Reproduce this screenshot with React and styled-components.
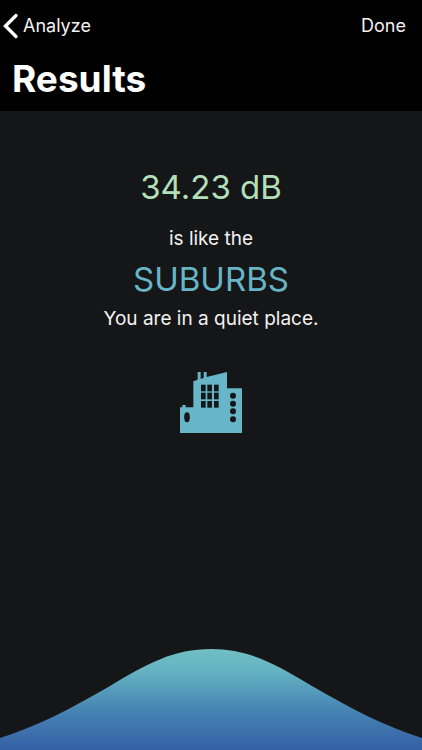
import React from "react";
import styled, { createGlobalStyle } from "styled-components";

const App = () => {
    return (
        <>
            <GlobalStyle />
            <Screen>
                <Header>
                    <NavBar>
                        <NavButton type="button">
                            <BackIcon />
                            Analyze
                        </NavButton>
                        <NavButton type="button">Done</NavButton>
                    </NavBar>
                    <Title>Results</Title>
                </Header>
                <Content>
                    <Reading $color="#b2dfb8">34.23 dB</Reading>
                    <Caption $spaced>is like the</Caption>
                    <Reading $color="#67b5c6">SUBURBS</Reading>
                    <Caption>You are in a quiet place.</Caption>
                    <BuildingIcon />
                </Content>
                <Wave />
            </Screen>
        </>
    )
}

const BackIcon = () => (
    <svg width="16" height="26" viewBox="0 0 16 26" fill="none" aria-hidden="true">
        <path d="M13 2.5 2.5 13 13 23.5" stroke="#fff" strokeWidth="3.4" strokeLinecap="round" />
    </svg>
)

const BuildingIcon = () => (
    <Building viewBox="27 25 186 183" aria-hidden="true">
        <path
            fill="#67b5c6"
            d="M27 131H34V124H44V131H67V53L80 48V25H89V46L98 43V25H107V40L168 25V74H213V208H27Z"
        />
        <g fill="#151618">
            {[63, 87, 112].map((y) => (
                [90, 109, 129].map((x) => (
                    <rect key={`${x}-${y}`} x={x} y={y} width="14" height="20" />
                ))
            ))}
            {[96, 120, 143, 167].map((y) => (
                <circle key={y} cx="186" cy={y} r="9" />
            ))}
            <ellipse cx="48" cy="161" rx="8.5" ry="15" />
        </g>
    </Building>
)

const Wave = () => (
    <WaveSvg viewBox="0 0 422 102" preserveAspectRatio="none" aria-hidden="true">
        <defs>
            <linearGradient id="wave" x1="0" y1="0" x2="0" y2="1">
                <stop offset="0" stopColor="#70bfc2" />
                <stop offset="0.2" stopColor="#65b4c3" />
                <stop offset="0.6" stopColor="#4785b3" />
                <stop offset="1" stopColor="#345fa5" />
            </linearGradient>
        </defs>
        <path
            fill="url(#wave)"
            d="M0 90C40 77 72 60 110 38C148 15 174 1 211 1C248 1 274 15 312 38C350 60 382 77 422 90V102H0Z"
        />
    </WaveSvg>
)

export default App;

const GlobalStyle = createGlobalStyle`
    * {
        box-sizing: border-box;
    }

    body {
        margin: 0;
        background-color: #151618;
        color: #fff;
        font-family: Inter, "Liberation Sans", sans-serif;
    }
`;

const Screen = styled.div`
    display: flex;
    flex-direction: column;
    min-height: 100vh;
`;

const Header = styled.header`
    background-color: #000;
    padding-bottom: 6px;
`;

const NavBar = styled.nav`
    display: flex;
    align-items: center;
    justify-content: space-between;
    height: 52px;
    padding: 0 16px 0 3px;
`;

const NavButton = styled.button`
    display: flex;
    align-items: center;
    gap: 4px;
    padding: 0;
    border: none;
    background: none;
    color: #f2f2f2;
    font: inherit;
    font-size: 18px;
    line-height: 24px;
    cursor: pointer;
`;

const Title = styled.h1`
    margin: 0;
    padding: 0 12px;
    font-size: 37px;
    font-weight: 700;
    line-height: 53px;
`;

const Content = styled.main`
    display: flex;
    flex-direction: column;
    align-items: center;
    padding: 52px 16px 32px;
`;

const Reading = styled.p`
    margin: 0;
    color: ${(props) => props.$color};
    font-size: 33px;
    line-height: 48px;
`;

const Caption = styled.p`
    margin: ${(props) => (props.$spaced ? "16px 0 4px" : "4px 0 0")};
    color: #f2f2f2;
    font-size: 19px;
    line-height: 24px;
`;

const Building = styled.svg`
    width: 62px;
    height: 61px;
    margin-top: 41px;
`;

const WaveSvg = styled.svg`
    display: block;
    width: 100%;
    height: 102px;
    margin-top: auto;
`;
